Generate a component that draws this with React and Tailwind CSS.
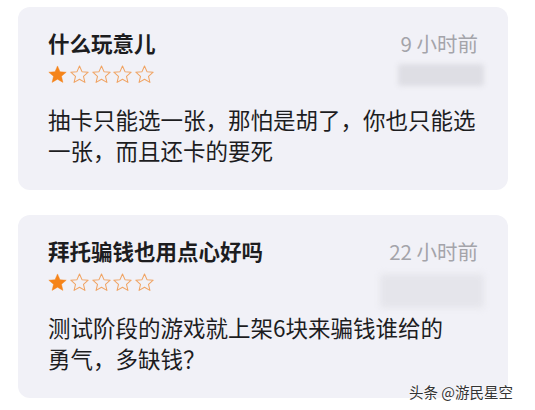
import React from "react";

function Star({ filled }) {
  return (
    <svg width="21" height="21" viewBox="0 0 24 24" className="shrink-0">
      <path
        d="M12 2.2l2.85 6.55 7.1.62-5.38 4.68 1.6 6.96L12 17.35 5.83 21l1.6-6.96L2.05 9.37l7.1-.62z"
        fill={filled ? "#f5841a" : "none"}
        stroke={filled ? "#f5841a" : "#f0a464"}
        strokeWidth={filled ? 0.5 : 1.2}
        strokeLinejoin="round"
      />
    </svg>
  );
}

function Stars() {
  return (
    <div className="ml-[-1px] flex gap-[0.8px]">
      <Star filled />
      <Star />
      <Star />
      <Star />
      <Star />
    </div>
  );
}

function Card({ title, time, lines, blur }) {
  return (
    <div className="relative h-[183px] rounded-[12px] bg-[#f1f1f7] pl-[30px] pr-[30px] pt-[22px]">
      <div className="flex items-start justify-between">
        <div className="text-[21.5px] leading-[28px] font-semibold text-[#1d1d1f]">{title}</div>
        <div className="text-[20.5px] leading-[28px] text-[#a4a4aa]">{time}</div>
      </div>
      <div className="mt-[5px] flex items-center justify-between h-[25px]">
        <Stars />
        {blur}
      </div>
      <div className="mt-[17px] text-[22.5px] leading-[31px] text-[#1d1d1f]">
        {lines.map((l, i) => (
          <div key={i}>{l}</div>
        ))}
      </div>
    </div>
  );
}

export default function App() {
  return (
    <div className="relative w-[535px] h-[410px] overflow-hidden bg-white font-['Noto_Sans_CJK_SC',sans-serif]">
      <div className="flex flex-col gap-[25px] pt-[7px] pl-[18px] pr-[27px]">
        <Card
          title="什么玩意儿"
          time="9 小时前"
          lines={["抽卡只能选一张，那怕是胡了，你也只能选", "一张，而且还卡的要死"]}
          blur={
            <div className="mr-[-6px] h-[22px] w-[86px] rounded-[3px] bg-[#dedee4] blur-[2.5px]" />
          }
        />
        <Card
          title="拜托骗钱也用点心好吗"
          time="22 小时前"
          lines={["测试阶段的游戏就上架6块来骗钱谁给的", "勇气，多缺钱？"]}
          blur={
            <div className="mr-[-6px] mt-[16px] h-[34px] w-[104px] rounded-[3px] bg-[#e5e5eb] blur-[3px]" />
          }
        />
      </div>
      <div className="absolute right-[22px] bottom-[9px] text-[14.5px] leading-[18px] text-[#333] [text-shadow:0_0_2px_#fff,0_0_2px_#fff]">
        头条 @游民星空
      </div>
    </div>
  );
}
